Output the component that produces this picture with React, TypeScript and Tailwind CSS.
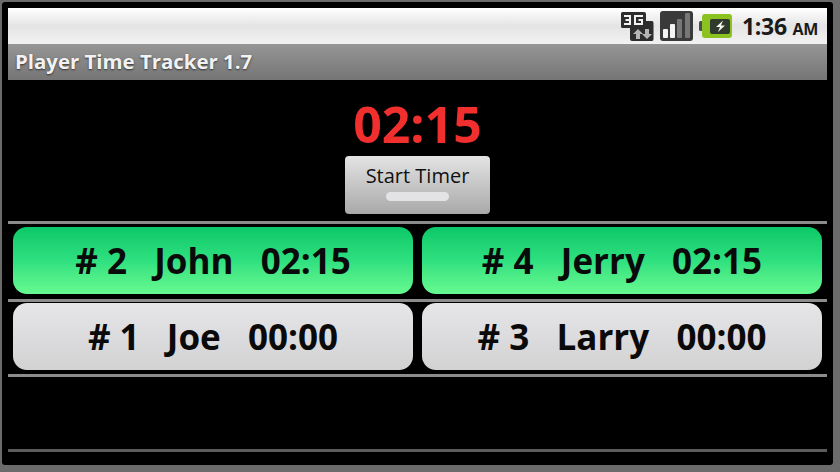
import type { ReactNode } from "react";

const font = "font-['Open_Sans','Noto_Sans',sans-serif]";

function Divider({ dim }: { dim?: boolean }) {
  return <div className={`h-[3px] shrink-0 ${dim ? "bg-[#5c5c5c]" : "bg-[#8c8c8c]"}`} />;
}

function Network3G() {
  return (
    <svg width="34" height="31" viewBox="0 0 34 31">
      <path d="M1 2.5 Q1 1 2.500 1 H24 Q26 1 26 3 V10 H32 Q33.500 10 33.500 12 V28 Q33.500 30 32 30 H12 Q10 30 10 28 V17 H2.500 Q1 17 1 15.500 Z" fill="#2d2d2d" />
      <path d="M4 4 H11 V14 H4 V12 H9 V10 H5.500 V8 H9 V6 H4 Z" fill="#f2f2f2" />
      <path d="M14 4 H23 V6 H16 V12 H21 V10 H18.500 V8 H23 V14 H14 Z" fill="#f2f2f2" />
      <path d="M18 18 L23 23 H20 V28 H16 V23 H13 Z" fill="#b5b5b5" />
      <path d="M27 28 L22 23 H25 V18 H29 V23 H32 Z" fill="#b5b5b5" />
    </svg>
  );
}

function Signal() {
  return (
    <svg width="33" height="30" viewBox="0 0 33 30">
      <rect x="0" y="0" width="33" height="30" rx="3" fill="#3a3a3a" />
      <rect x="3" y="18" width="5" height="9" rx="1" fill="#f4f4f4" />
      <rect x="10" y="13" width="5" height="14" rx="1" fill="#f4f4f4" />
      <rect x="17" y="8" width="5" height="19" rx="1" fill="#777" />
      <rect x="25" y="2" width="5" height="25" rx="1" fill="#777" />
    </svg>
  );
}

function Battery() {
  return (
    <svg width="33" height="24" viewBox="0 0 33 24">
      <rect x="0" y="7" width="4" height="10" rx="1.500" fill="#4d4d4d" />
      <rect x="3" y="0" width="30" height="24" rx="3" fill="#8cc21f" />
      <rect x="11" y="5" width="20" height="15" rx="2" fill="#2f3a2c" />
      <path d="M24 6.500 L17 13 H21 L19 18 L26 11.500 H22 Z" fill="#f3f6ea" />
    </svg>
  );
}

function PlayerButton({ active, children }: { active?: boolean; children: ReactNode }) {
  return (
    <button
      className={`flex-1 h-[67px] rounded-[14px] pt-[2px] flex items-center justify-center text-[35px] font-bold text-[#0a0a0a] whitespace-pre ${
        active
          ? "bg-gradient-to-b from-[#08c868] via-[#2ee07f] to-[#66fa90]"
          : "bg-gradient-to-b from-[#e6e5e8] to-[#d2d2d3]"
      }`}
    >
      {children}
    </button>
  );
}

export default function App() {
  return (
    <div className={`w-[840px] h-[472px] bg-[#6b6b6b] pt-[2px] pl-[2px] pr-[7px] pb-[7px] overflow-hidden ${font}`}>
      <div className="h-full bg-black rounded-[3px] pt-[6px] pl-[6px] pr-[6px] flex flex-col">
        {/* Status bar */}
        <div className="h-[36px] shrink-0 bg-gradient-to-b from-[#ffffff] via-[#e4e4e4] to-[#f2f2f2] flex items-center justify-end pr-[9px]">
          <Network3G />
          <div className="w-[6px]" />
          <Signal />
          <div className="w-[6px]" />
          <Battery />
          <span className="ml-[10px] text-[23px] font-bold text-[#1a1a1a] leading-none tracking-[-0.3px]">
            1:36 <span className="text-[16px]">AM</span>
          </span>
        </div>
        {/* Title */}
        <div className="h-[36px] shrink-0 bg-gradient-to-b from-[#969696] to-[#757575] flex items-center pl-[7px] pb-[2px] text-[20.400px] font-bold text-[#f2f2f2] [text-shadow:0_1px_2px_#333]">
          Player Time Tracker 1.7
        </div>
        {/* Timer */}
        <div className="h-[141px] shrink-0 flex flex-col items-center">
          <div className="mt-[13px] mb-[1px] h-[62px] flex items-center text-[50px] font-bold text-[#f22f2f] leading-none">
            02:15
          </div>
          <button className="w-[145px] h-[58px] rounded-[4px] bg-gradient-to-b from-[#e4e4e4] to-[#a9a9a9] flex flex-col items-center pt-[6px]">
            <span className="text-[20px] leading-[27px] text-[#111]">Start Timer</span>
            <span className="mt-[3px] w-[63px] h-[9px] rounded-full bg-[#e3e3e6]" />
          </button>
        </div>
        <Divider />
        <div className="flex gap-[9px] px-[5px] pt-[3px] pb-[5px]">
          <PlayerButton active>{"# 2   John   02:15"}</PlayerButton>
          <PlayerButton active>{"# 4   Jerry   02:15"}</PlayerButton>
        </div>
        <Divider />
        <div className="flex gap-[9px] px-[5px] pt-[1px] pb-[4px]">
          <PlayerButton>{"# 1   Joe   00:00"}</PlayerButton>
          <PlayerButton>{"# 3   Larry   00:00"}</PlayerButton>
        </div>
        <Divider />
        <div className="h-[72px] shrink-0" />
        <Divider dim />
      </div>
    </div>
  );
}
